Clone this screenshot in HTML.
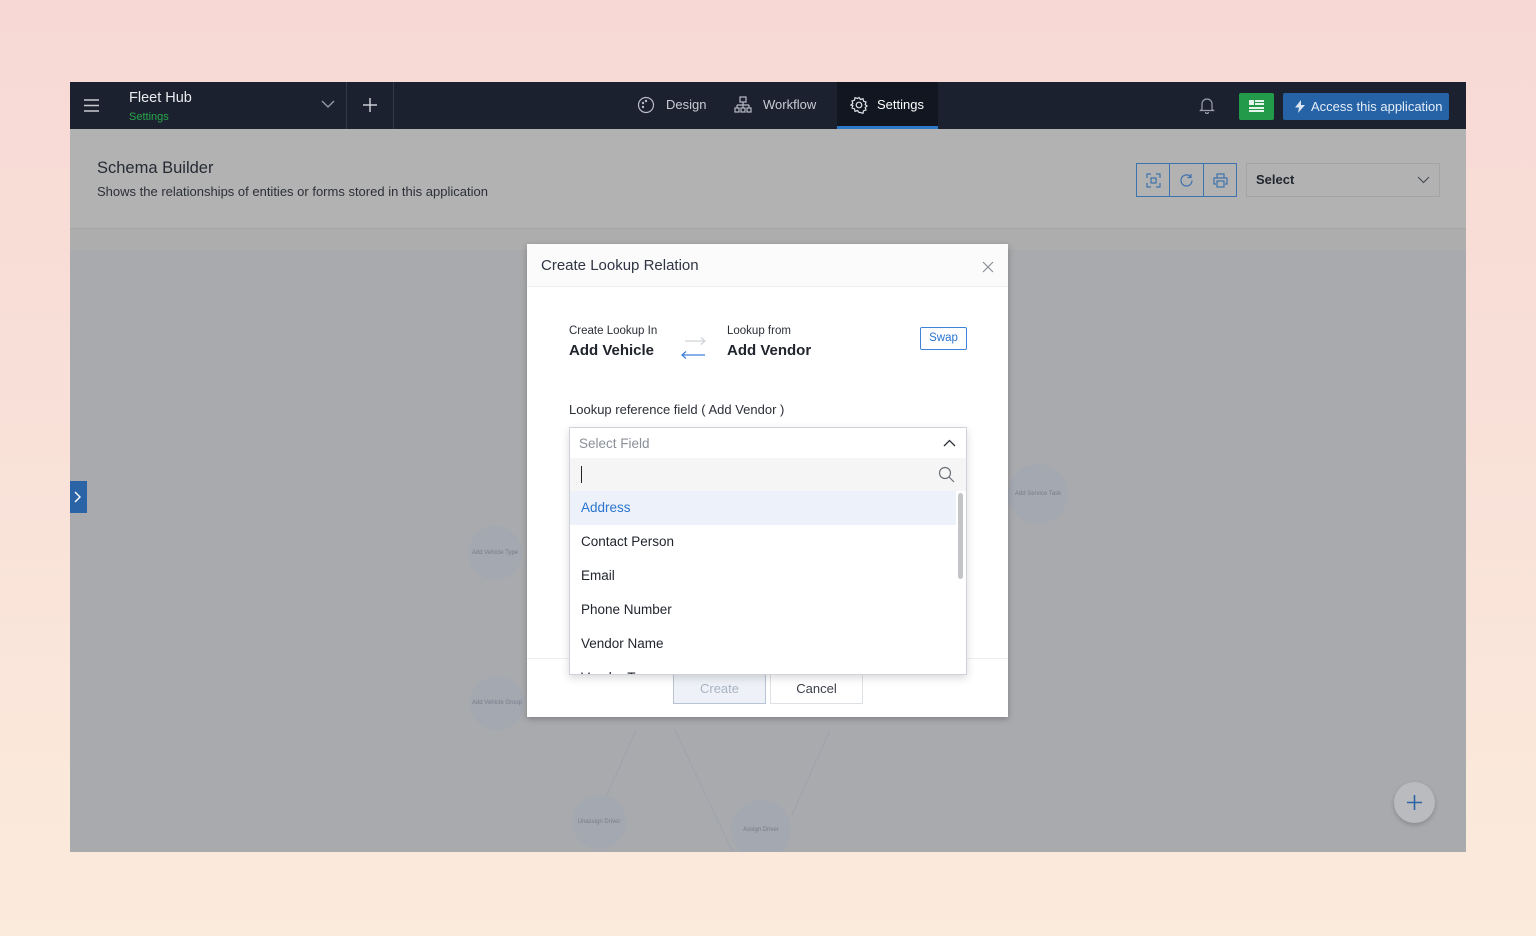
<!DOCTYPE html>
<html><head><meta charset="utf-8"><style>
*{box-sizing:border-box;margin:0;padding:0}
body{width:1536px;height:936px;overflow:hidden;background:linear-gradient(#f7d8d5,#fbebdc);font-family:"Liberation Sans",sans-serif;position:relative}
.app{position:absolute;left:70px;top:82px;width:1396px;height:770px;background:#a9aaad;overflow:hidden}
.nav{position:absolute;left:0;top:0;width:1396px;height:47px;background:#1c2130;color:#c9ccd3}
.hdr{position:absolute;left:0;top:47px;width:1396px;height:99px;background:#b2b2b2}
.strip{position:absolute;left:0;top:146px;width:1396px;height:22px;background:#adadad;border-top:1px solid #a6a6a6}
.node{position:absolute;border-radius:50%;background:#a3a8b1;color:#777e8a;font-size:6px;display:flex;align-items:center;justify-content:center;text-align:center}
.modal{position:absolute;left:527px;top:244px;width:481px;height:473px;background:#fff;box-shadow:0 2px 6px rgba(0,0,0,.25)}
.mh{height:43px;background:#fbfbfc;border-bottom:1px solid #eceef1;padding:13px 14px;font-size:15px;color:#2f3542}
.dd{position:absolute;left:569px;top:427px;width:398px;height:248px;background:#fff;border:1px solid #cfd2d8;box-shadow:0 3px 8px rgba(0,0,0,.15)}
.it{height:34px;line-height:34px;padding-left:11px;font-size:13.5px;color:#1f232b}
</style></head><body>
<div class="app">
 <div class="nav">
  <svg style="position:absolute;left:14px;top:17px" width="16" height="13"><path d="M0 1h15M0 6.5h15M0 12h15" stroke="#c9ccd3" stroke-width="1.5"/></svg>
  <div style="position:absolute;left:59px;top:8px;font-size:14.5px;color:#e8eaee">Fleet Hub</div>
  <div style="position:absolute;left:59px;top:29px;font-size:11px;color:#27a84a">Settings</div>
  <svg style="position:absolute;left:251px;top:18px" width="14" height="9"><path d="M1 1l6 6 6-6" stroke="#9aa0ab" fill="none" stroke-width="1.3"/></svg>
  <div style="position:absolute;left:276px;top:0;width:1px;height:47px;background:#333a48"></div>
  <svg style="position:absolute;left:292px;top:15px" width="16" height="16"><path d="M8 1v14M1 8h14" stroke="#c9ccd3" stroke-width="1.5"/></svg>
  <div style="position:absolute;left:323px;top:0;width:1px;height:47px;background:#333a48"></div>
  <svg style="position:absolute;left:567px;top:14px" width="18" height="18"><circle cx="9" cy="9" r="7.5" fill="none" stroke="#b7bcc6" stroke-width="1.2"/><circle cx="6" cy="7" r="1.2" fill="#b7bcc6"/><circle cx="9" cy="5" r="1.2" fill="#b7bcc6"/><circle cx="6" cy="11" r="1.2" fill="#b7bcc6"/></svg>
  <div style="position:absolute;left:596px;top:15px;font-size:13px">Design</div>
  <svg style="position:absolute;left:664px;top:14px" width="18" height="18" fill="none" stroke="#b7bcc6" stroke-width="1.2"><rect x="6" y="1" width="6" height="5"/><path d="M9 6v3M3 9h12M3 9v3M9 9v3M15 9v3"/><rect x="1" y="12" width="4" height="4"/><rect x="7" y="12" width="4" height="4"/><rect x="13" y="12" width="4" height="4"/></svg>
  <div style="position:absolute;left:693px;top:15px;font-size:13px">Workflow</div>
  <div style="position:absolute;left:767px;top:0;width:101px;height:47px;background:#111620;border-bottom:3px solid #2c79c7"></div>
  <svg style="position:absolute;left:780px;top:14px" width="18" height="18" fill="none" stroke="#e0e3e8" stroke-width="1.2"><circle cx="9" cy="9" r="2.8"/><path d="M9 1.5l1.5 2 2.5-.8.5 2.5 2.5.8-.8 2.5 1.8 1.5-1.8 1.5.8 2.5-2.5.8-.5 2.5-2.5-.8L9 16.5l-1.5-2-2.5.8-.5-2.5-2.5-.8.8-2.5L1 9l1.8-1.5L2 5l2.5-.8L5 1.7l2.5.8z"/></svg>
  <div style="position:absolute;left:807px;top:15px;font-size:13px;color:#fff">Settings</div>
  <svg style="position:absolute;left:1129px;top:14px" width="16" height="18" fill="none" stroke="#9aa0ab" stroke-width="1.2"><path d="M3 13V8a5 5 0 0110 0v5l1.5 1.5h-13zM6.5 16a1.5 1.5 0 003 0"/></svg>
  <div style="position:absolute;left:1169px;top:11px;width:35px;height:27px;background:#239a4a;border-radius:2px"><svg style="position:absolute;left:10px;top:7px" width="15" height="13" fill="#e8f5ec"><rect x="0" y="0" width="5" height="5"/><rect x="6" y="0" width="9" height="2"/><rect x="6" y="3" width="9" height="2"/><rect x="0" y="7" width="15" height="2"/><rect x="0" y="10" width="15" height="2"/></svg></div>
  <div style="position:absolute;left:1213px;top:11px;width:166px;height:27px;background:#2563a6;border-radius:2px;color:#e5edf7;font-size:13px;line-height:27px;padding-left:28px">Access this application</div>
  <svg style="position:absolute;left:1225px;top:18px" width="10" height="13"><path d="M6 0L0 7.5h4L3 13l7-8H6z" fill="#dbe5f2"/></svg>
 </div>
 <div class="hdr">
  <div style="position:absolute;left:27px;top:30px;font-size:16.5px;color:#252a33">Schema Builder</div>
  <div style="position:absolute;left:27px;top:55px;font-size:13px;color:#2b2f37">Shows the relationships of entities or forms stored in this application</div>
  <div style="position:absolute;left:1066px;top:34px;width:101px;height:34px;border:1px solid #3f73ad;display:flex">
   <div style="width:33px;border-right:1px solid #3f73ad;position:relative"><svg style="position:absolute;left:9px;top:9px" width="15" height="15" fill="none" stroke="#3f73ad" stroke-width="1.2"><path d="M1 5V1h4M10 1h4v4M14 10v4h-4M5 14H1v-4"/><rect x="5" y="5" width="5" height="5"/></svg></div>
   <div style="width:34px;border-right:1px solid #3f73ad;position:relative"><svg style="position:absolute;left:9px;top:9px" width="15" height="15" fill="none" stroke="#3f73ad" stroke-width="1.2"><path d="M13 7.5A5.5 5.5 0 112 7.5a5.5 5.5 0 019.5-3.8M12 1v3.5H8.5"/></svg></div>
   <div style="flex:1;position:relative"><svg style="position:absolute;left:9px;top:9px" width="15" height="15" fill="none" stroke="#3f73ad" stroke-width="1.2"><path d="M4 5V1h7v4M3 11H1V5h13v6h-2"/><rect x="4" y="8" width="7" height="6"/></svg></div>
  </div>
  <div style="position:absolute;left:1176px;top:34px;width:194px;height:34px;border:1px solid #a4a4a4;font-size:13px;color:#22262e;font-weight:bold;line-height:32px;padding-left:9px">Select</div>
  <svg style="position:absolute;left:1347px;top:47px" width="13" height="8"><path d="M1 1l5.5 5.5L12 1" stroke="#4a4f58" fill="none" stroke-width="1.2"/></svg>
 </div>
 <div class="strip"></div>
 <svg style="position:absolute;left:0;top:168px" width="1396" height="602"><path d="M566 480L528 565M605 480L690 660M760 480L722 565" stroke="#9ea3ab" stroke-width="1"/></svg>
 <div class="node" style="left:398px;top:444px;width:54px;height:54px">Add Vehicle Type</div>
 <div class="node" style="left:400px;top:594px;width:54px;height:54px">Add Vehicle Group</div>
 <div class="node" style="left:938px;top:382px;width:60px;height:60px">Add Service Task</div>
 <div class="node" style="left:502px;top:713px;width:54px;height:54px">Unassign Driver</div>
 <div class="node" style="left:661px;top:718px;width:60px;height:60px">Assign Driver</div>
 <div style="position:absolute;left:0;top:399px;width:17px;height:32px;background:#2b64a6"><svg style="position:absolute;left:4px;top:10px" width="8" height="12"><path d="M1 1l5 5-5 5" stroke="#fff" fill="none" stroke-width="1.4"/></svg></div>
 <div style="position:absolute;left:1324px;top:700px;width:41px;height:41px;border-radius:50%;background:#b9bbbf;box-shadow:0 2px 5px rgba(0,0,0,.2)"><svg style="position:absolute;left:12px;top:12px" width="17" height="17"><path d="M8.5 1v15M1 8.5h15" stroke="#2c64a5" stroke-width="1.6"/></svg></div>
</div>
<div class="modal">
 <div class="mh">Create Lookup Relation</div>
 <svg style="position:absolute;left:455px;top:17px" width="12" height="12"><path d="M1 1l10 10M11 1L1 11" stroke="#8a8f98" stroke-width="1.2"/></svg>
 <div style="position:absolute;left:42px;top:81px;font-size:11.5px;color:#2b2f37">Create Lookup In</div>
 <div style="position:absolute;left:42px;top:98px;font-size:15px;color:#20242c;font-weight:bold">Add Vehicle</div>
 <svg style="position:absolute;left:152px;top:92px" width="32" height="24" fill="none" stroke-width="1.2"><path d="M6 5h20M22 1.5l4 3.5-4 3.5" stroke="#d0d3d8"/><path d="M26 19H3M7 15.5L3 19l4 3.5" stroke="#3d7fd6"/></svg>
 <div style="position:absolute;left:200px;top:81px;font-size:11.5px;color:#2b2f37">Lookup from</div>
 <div style="position:absolute;left:200px;top:98px;font-size:15px;color:#20242c;font-weight:bold">Add Vendor</div>
 <div style="position:absolute;left:393px;top:83px;width:47px;height:23px;border:1px solid #3f83d6;border-radius:2px;color:#2a74cf;font-size:11.5px;text-align:center;line-height:21px">Swap</div>
 <div style="position:absolute;left:42px;top:158px;font-size:13px;color:#2b2f37">Lookup reference field ( Add Vendor )</div>
 <div style="position:absolute;left:0;top:414px;width:481px;height:1px;background:#eceef1"></div>
 <div style="position:absolute;left:146px;top:430px;width:93px;height:30px;border:1px solid #b8c3d6;background:#eef2f8;color:#aab3c2;font-size:13px;text-align:center;line-height:28px">Create</div>
 <div style="position:absolute;left:243px;top:430px;width:93px;height:30px;border:1px solid #dde0e5;color:#3a3f48;font-size:13px;text-align:center;line-height:28px">Cancel</div>
</div>
<div class="dd">
 <div style="height:30px;padding:8px 9px;font-size:13.5px;color:#8a8f98">Select Field</div>
 <svg style="position:absolute;left:373px;top:11px" width="13" height="8"><path d="M1 7l5.5-5.5L12 7" stroke="#2b2f37" fill="none" stroke-width="1.3"/></svg>
 <div style="height:33px;background:#f5f5f6;position:relative"><div style="position:absolute;left:11px;top:8px;width:1px;height:17px;background:#222"></div><svg style="position:absolute;left:368px;top:8px" width="17" height="17" fill="none" stroke="#6b7078" stroke-width="1.2"><circle cx="7" cy="7" r="5.5"/><path d="M11 11l5 5"/></svg></div>
 <div style="height:183px;overflow:hidden;position:relative">
  <div class="it" style="background:#edf2fa;color:#2a74cf;margin-right:10px">Address</div>
  <div class="it">Contact Person</div>
  <div class="it">Email</div>
  <div class="it">Phone Number</div>
  <div class="it">Vendor Name</div>
  <div class="it">Vendor Type</div>
  <div style="position:absolute;right:3px;top:2px;width:5px;height:86px;background:#c3c5c9;border-radius:3px"></div>
 </div>
</div>
</body></html>
